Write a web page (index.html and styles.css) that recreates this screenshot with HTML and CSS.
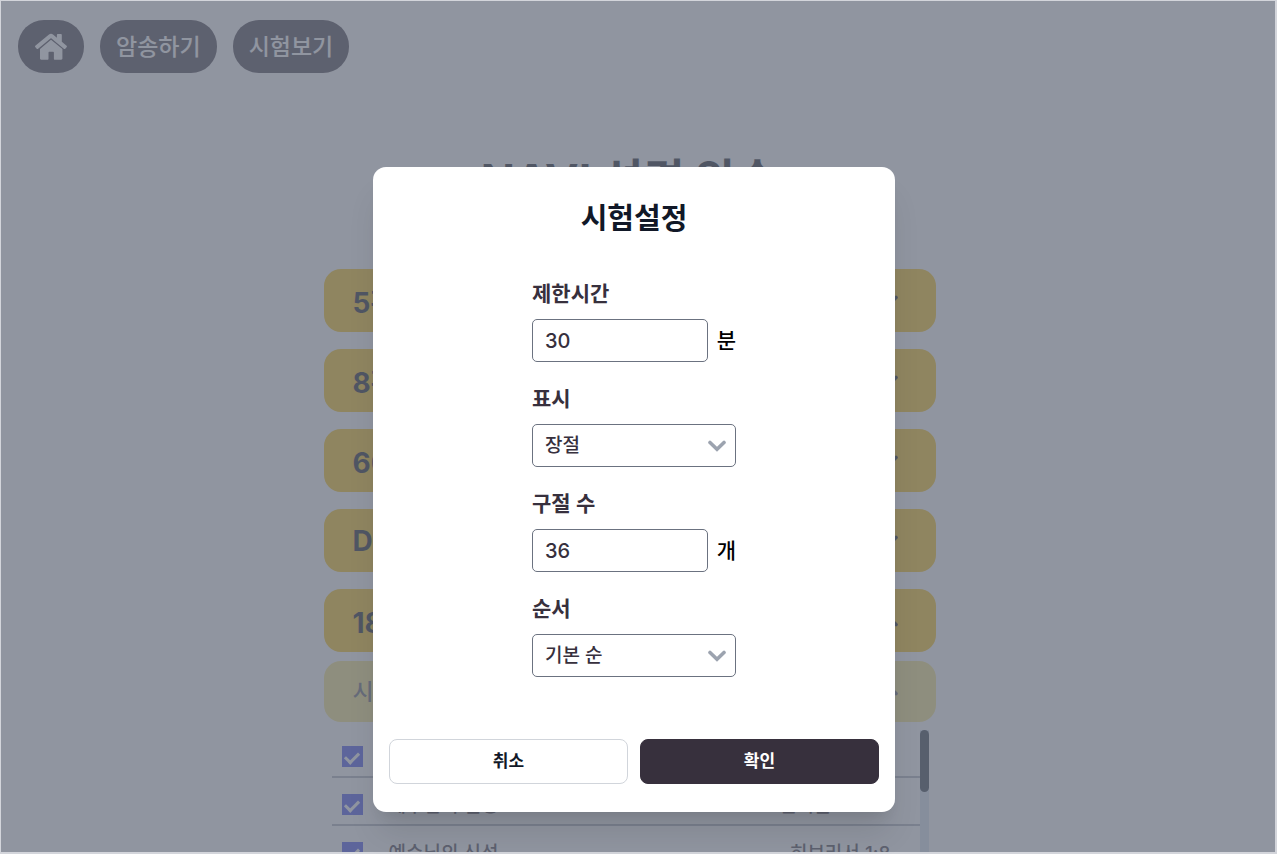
FILE: index.html
```html
<!DOCTYPE html>
<html lang="ko">
<head>
<meta charset="utf-8">
<meta name="viewport" content="width=device-width, initial-scale=1">
<title>NAVI 성경 암송</title>
<link rel="stylesheet" href="styles.css">
</head>
<body>
<svg class="sprite" aria-hidden="true">
  <symbol id="chevron" viewBox="0 0 18 12"><path d="M2 2.500 9 9.200 16 2.500" fill="none" stroke="currentColor" stroke-width="3.600" stroke-linecap="round" stroke-linejoin="miter"/></symbol>
</svg>
<div class="page">
  <nav class="nav">
    <a class="pill pill-home" href="#home" aria-label="홈">
      <svg class="home-icon" viewBox="0 0 34 28" aria-hidden="true"><path fill="currentColor" d="M17 6.800 6 16v9.600c0 .7.500 1.200 1.200 1.200h6.300c.6 0 1-.5 1-1.100v-5.900c0-.6.4-1 1-1h3.400c.6 0 1 .4 1 1v5.900c0 .6.4 1.100 1 1.100h6.300c.7 0 1.200-.5 1.200-1.200V16z"/><path fill="currentColor" d="M32.600 12.800 27.800 8.800V1.900c0-.5-.3-.8-.8-.8h-3.300c-.5 0-.8.3-.8.8v2.900L19 1.500c-1.200-1-2.800-1-4 0L1.300 12.800c-.4.300-.4.800-.1 1.100l1.500 1.900c.3.300.8.400 1.100.1L16.500 5.500c.3-.3.700-.3 1 0l12.600 10.400c.4.300.9.200 1.200-.1l1.500-1.900c.3-.3.200-.8-.2-1.100z"/></svg>
    </a>
    <a class="pill" href="#recite">암송하기</a>
    <a class="pill" href="#test">시험보기</a>
  </nav>
  <main class="content">
    <h1 class="page-title">NAVI 성경 암송</h1>
    <div class="groups">
      <button class="group" type="button">5확신<svg class="chevron"><use href="#chevron"/></svg></button>
      <button class="group" type="button">8확신<svg class="chevron"><use href="#chevron"/></svg></button>
      <button class="group" type="button">60구절<svg class="chevron"><use href="#chevron"/></svg></button>
      <button class="group" type="button">DEP 242<svg class="chevron"><use href="#chevron"/></svg></button>
      <button class="group" type="button">180구절<svg class="chevron chevron-up"><use href="#chevron"/></svg></button>
    </div>
    <button class="subgroup" type="button">시리즈<svg class="chevron chevron-up"><use href="#chevron"/></svg></button>
    <div class="verses">
      <ul class="verse-list">
        <li><label class="verse"><input class="check" type="checkbox" checked><span class="verse-name">하나님</span><span>창세기</span></label></li>
        <li><label class="verse"><input class="check" type="checkbox" checked><span class="verse-name">예수님의 신성</span><span class="verse-ref">빌리몬</span></label></li>
        <li><label class="verse"><input class="check" type="checkbox" checked><span class="verse-name">예수님의 신성</span><span>히브리서 1:8</span></label></li>
      </ul>
      <div class="track"><div class="thumb"></div></div>
    </div>
  </main>
</div>
<div class="overlay">
  <form class="dialog" role="dialog" aria-modal="true" aria-labelledby="dialog-title">
    <h2 class="dialog-title" id="dialog-title">시험설정</h2>
    <div class="fields">
      <div class="field">
        <label for="limit">제한시간</label>
        <div class="control-row"><input class="control" id="limit" type="text" inputmode="numeric" value="30"><span class="unit">분</span></div>
      </div>
      <div class="field">
        <label for="display">표시</label>
        <div class="select-box"><select class="control select" id="display"><option>장절</option></select><svg class="chevron select-arrow"><use href="#chevron"/></svg></div>
      </div>
      <div class="field">
        <label for="count">구절 수</label>
        <div class="control-row"><input class="control" id="count" type="text" inputmode="numeric" value="36"><span class="unit">개</span></div>
      </div>
      <div class="field">
        <label for="order">순서</label>
        <div class="select-box"><select class="control select" id="order"><option>기본 순</option></select><svg class="chevron select-arrow"><use href="#chevron"/></svg></div>
      </div>
    </div>
    <div class="actions">
      <button class="action" type="button">취소</button>
      <button class="action action-primary" type="button">확인</button>
    </div>
  </form>
</div>
</body>
</html>
```

FILE: styles.css
```css
* { box-sizing: border-box; }
html, body { height: 100%; }
body {
  margin: 0;
  overflow: hidden;
  background: #d3d5db;
  color: #37303d;
  font-family: Inter, "Noto Sans CJK KR", sans-serif;
}
button, input, select { font: inherit; color: inherit; }
.sprite { position: absolute; width: 0; height: 0; }

.page {
  height: calc(100vh - 3px);
  margin: 1px 2px 2px 1px;
  padding: 19px 34px 0 17px;
  overflow: hidden;
  background: #fff;
}
.nav { display: flex; gap: 16px; }
.pill {
  display: flex;
  align-items: center;
  height: 53px;
  padding: 0 16px 3px;
  border-radius: 26px;
  background: #37303d;
  color: #fff;
  font-size: 23px;
  font-weight: 500;
  text-decoration: none;
}
.pill-home { padding-bottom: 0; }
.home-icon { width: 34px; height: 28px; }

.content { max-width: 612px; margin: 0 auto; }
.page-title {
  margin: 76px 0 56px;
  color: #030712;
  font-size: 45px;
  line-height: 64px;
  text-align: center;
}
.groups { display: grid; gap: 16px; }
.group, .subgroup {
  display: flex;
  align-items: center;
  justify-content: space-between;
  width: 100%;
  height: 63px;
  padding: 0 38px 0 29px;
  border: 0;
  border-radius: 17px;
  background: #fbbf00;
  color: #030712;
  font-size: 28px;
  font-weight: 700;
}
.groups { gap: 17px; }
.subgroup {
  height: 61px;
  margin-top: 9px;
  padding-bottom: 4px;
  background: #f8e478;
  color: #585866;
  font-size: 23px;
  font-weight: 500;
}
.chevron { width: 18px; height: 12px; }
.chevron-up { transform: rotate(180deg); }

.verses { display: flex; margin: 8px 7px 0 8px; }
.verse-list { flex: 1; margin: 0; padding: 0; list-style: none; }
.verse {
  display: flex;
  align-items: center;
  height: 48px;
  padding: 7px 29px 0 10px;
  border-bottom: 2px solid #a9adb8;
  color: #37303d;
  font-size: 19px;
  font-weight: 500;
}
.verse span { padding-bottom: 3px; }
.verse-name { flex: 1; }
.verse-ref { padding-right: 59px; }
.check {
  display: flex;
  justify-content: center;
  appearance: none;
  width: 21px;
  height: 21px;
  margin: 0 26px 0 0;
  padding-top: 6px;
  background: #3542eb;
}
.check::before {
  content: "";
  width: 11px;
  height: 6px;
  border: solid #fff;
  border-width: 0 0 3px 3px;
  transform: rotate(-45deg);
}
.track { width: 9px; background: #d5e3f0; }
.thumb { height: 62px; border-radius: 5px; background: #1f2937; }

.overlay {
  position: absolute;
  inset: 1px 2px 2px 1px;
  display: flex;
  align-items: center;
  justify-content: center;
  padding: 126px 8px 0 0;
  background: rgb(107 114 128 / 75%);
}
.dialog {
  width: 522px;
  padding: 28px 16px 28px;
  border-radius: 13px;
  background: #fff;
  box-shadow: 0 26px 32px -6px rgb(0 0 0 / 10%), 0 10px 13px -8px rgb(0 0 0 / 10%);
}
.dialog-title {
  margin: 0;
  color: #111827;
  font-size: 29px;
  line-height: 48px;
  text-align: center;
}
.fields { display: grid; gap: 21px; width: 204px; margin: 35px auto 62px; }
.field label {
  display: block;
  margin-bottom: 9px;
  font-size: 21px;
  font-weight: 600;
  line-height: 32px;
}
.control-row { display: flex; align-items: center; justify-content: space-between; }
.control {
  width: 176px;
  height: 43px;
  padding: 0 12px;
  border: 1px solid #6b7280;
  border-radius: 5px;
  background: #fff;
  font-size: 20px;
  font-weight: 500;
}
.unit { color: #000; font-size: 21px; font-weight: 500; line-height: 32px; }
.select-box { position: relative; }
.select { display: block; width: 100%; appearance: none; font-size: 19px; }
.select-arrow {
  position: absolute;
  top: 16px;
  right: 10px;
  color: #9ca3af;
  pointer-events: none;
}
.actions { display: grid; grid-template-columns: 1fr 1fr; gap: 12px; }
.action {
  height: 45px;
  padding: 0 0 4px;
  border: 1px solid #d1d5db;
  border-radius: 8px;
  background: #fff;
  color: #111827;
  font-size: 17px;
  font-weight: 700;
}
.action-primary { border-color: #37303d; background: #37303d; color: #fff; }
```
